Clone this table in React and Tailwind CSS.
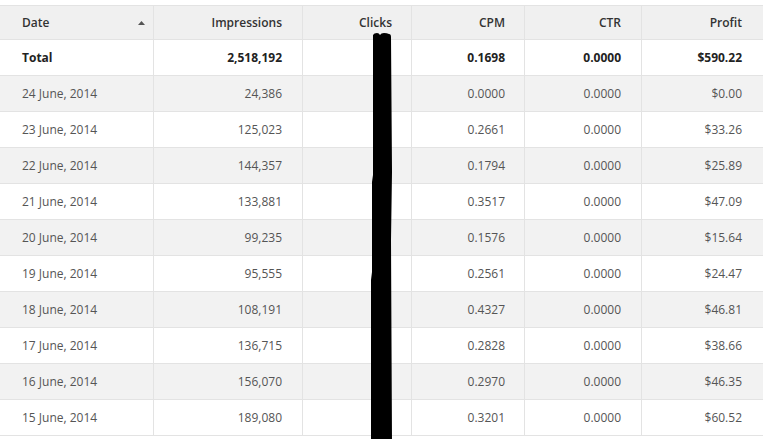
import React from 'react';

const rows = [
  ['24 June, 2014', '24,386', '0.0000', '0.0000', '$0.00'],
  ['23 June, 2014', '125,023', '0.2661', '0.0000', '$33.26'],
  ['22 June, 2014', '144,357', '0.1794', '0.0000', '$25.89'],
  ['21 June, 2014', '133,881', '0.3517', '0.0000', '$47.09'],
  ['20 June, 2014', '99,235', '0.1576', '0.0000', '$15.64'],
  ['19 June, 2014', '95,555', '0.2561', '0.0000', '$24.47'],
  ['18 June, 2014', '108,191', '0.4327', '0.0000', '$46.81'],
  ['17 June, 2014', '136,715', '0.2828', '0.0000', '$38.66'],
  ['16 June, 2014', '156,070', '0.2970', '0.0000', '$46.35'],
  ['15 June, 2014', '189,080', '0.3201', '0.0000', '$60.52'],
];

function Row({ cells, className }) {
  return (
    <div className={`flex h-[36px] border-b border-[#e3e3e3] ${className}`}>
      <div className="w-[154px] shrink-0 border-r border-[#e3e3e3] flex items-center pl-[22px]">{cells[0]}</div>
      <div className="w-[149px] shrink-0 border-r border-[#e3e3e3] flex items-center justify-end pr-[20px]">{cells[1]}</div>
      <div className="w-[109px] shrink-0 border-r border-[#e3e3e3]" />
      <div className="w-[113px] shrink-0 border-r border-[#e3e3e3] flex items-center justify-end pr-[19px]">{cells[2]}</div>
      <div className="w-[117px] shrink-0 border-r border-[#e3e3e3] flex items-center justify-end pr-[20px]">{cells[3]}</div>
      <div className="flex-1 flex items-center justify-end pr-[21px]">{cells[4]}</div>
    </div>
  );
}

export default function App() {
  return (
    <div className="relative w-[763px] h-[439px] overflow-hidden bg-white pt-[5px] text-[12px] font-['Open_Sans',sans-serif]">
      {/* header */}
      <div className="flex h-[35px] border-y border-[#e3e3e3] bg-[#f0f0f0] text-[#333] font-semibold">
        <div className="w-[154px] shrink-0 border-r border-[#e3e3e3] flex items-center pl-[22px] pr-[8px] justify-between">
          <span>Date</span>
          <svg width="7" height="4" viewBox="0 0 7 4" className="mt-[1px]">
            <path d="M3.5 0L7 4H0z" fill="#555" />
          </svg>
        </div>
        <div className="w-[149px] shrink-0 border-r border-[#e3e3e3] flex items-center justify-end pr-[20px]">Impressions</div>
        <div className="w-[109px] shrink-0 border-r border-[#e3e3e3] flex items-center justify-end pr-[19px]">Clicks</div>
        <div className="w-[113px] shrink-0 border-r border-[#e3e3e3] flex items-center justify-end pr-[19px]">CPM</div>
        <div className="w-[117px] shrink-0 border-r border-[#e3e3e3] flex items-center justify-end pr-[20px]">CTR</div>
        <div className="flex-1 flex items-center justify-end pr-[21px]">Profit</div>
      </div>

      <Row cells={['Total', '2,518,192', '0.1698', '0.0000', '$590.22']} className="bg-white text-[#222] font-bold" />
      {rows.map((r, i) => (
        <Row key={r[0]} cells={r} className={`text-[#555] ${i % 2 === 0 ? 'bg-[#f2f2f2]' : 'bg-white'}`} />
      ))}

      {/* redaction marker */}
      <svg className="absolute left-[368px] top-[32px]" width="28" height="410" viewBox="0 0 28 410">
        <path
          d="M5 3 Q6 1 9 1 Q11 1 12 3 Q13 1 16 1 Q19 1 21 2 Q23 2 23 5 L24 140 L23 208 L24 410 L3 410 L3 248 L4 240 L4 150 L5 143 Z"
          fill="#000"
        />
      </svg>
    </div>
  );
}
